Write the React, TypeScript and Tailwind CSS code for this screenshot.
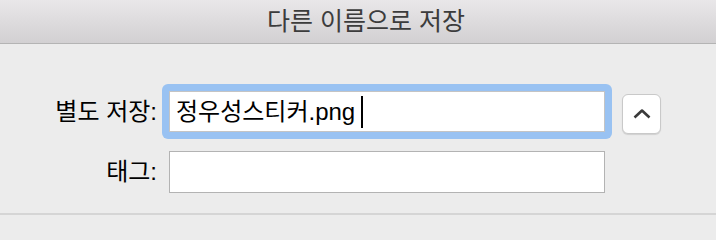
import React from 'react';

const FONT = { fontFamily: '"Liberation Sans", "Noto Sans CJK KR", sans-serif' };

function ChevronUp() {
  return (
    <svg width="18" height="10" viewBox="0 0 18 10" fill="none">
      <polyline points="1.5,8.5 9,1.5 16.5,8.5" stroke="#3a3a3a" strokeWidth="2.6" strokeLinejoin="round" />
    </svg>
  );
}

export default function App() {
  return (
    <div className="w-[716px] h-[240px] bg-[#ececec] overflow-hidden flex flex-col" style={FONT}>
      {/* Title bar */}
      <div className="h-[44px] shrink-0 flex items-center justify-center pl-[16px] border-b border-[#b4b4b4] bg-gradient-to-b from-[#e9e7e9] to-[#d2d0d2]">
        <span className="text-[25px] text-[#3c3c3c] leading-none">다른 이름으로 저장</span>
      </div>

      {/* Form */}
      <div className="pt-[40px] flex flex-col gap-[5px]">
        <div className="flex items-center">
          <label className="w-[157px] text-right text-[24px] text-black leading-none">별도 저장:</label>
          <div className="ml-[5px] p-[7px] bg-[#99c2f2] rounded-[6px]">
            <div className="w-[436px] h-[41px] bg-white border border-[#c4c4c4] flex items-center pl-[6px] text-[24px] text-black leading-none">
              <span>정우성스티커.png</span>
              <span className="ml-[6px] w-[2px] h-[32px] bg-black" />
            </div>
          </div>
          <button className="ml-[10px] mt-[4px] w-[39px] h-[40px] bg-white border border-[#c9c9c9] rounded-[6px] shadow-[0_1px_1px_rgba(0,0,0,0.12)] flex items-center justify-center">
            <ChevronUp />
          </button>
        </div>

        <div className="flex items-center">
          <label className="w-[157px] text-right text-[24px] text-black leading-none">태그:</label>
          <div className="ml-[5px] p-[7px]">
            <div className="w-[436px] h-[42px] bg-white border border-[#b3b3b3]" />
          </div>
        </div>
      </div>

      <div className="mt-[13px] border-t-2 border-[#d5d5d5]" />
    </div>
  );
}
